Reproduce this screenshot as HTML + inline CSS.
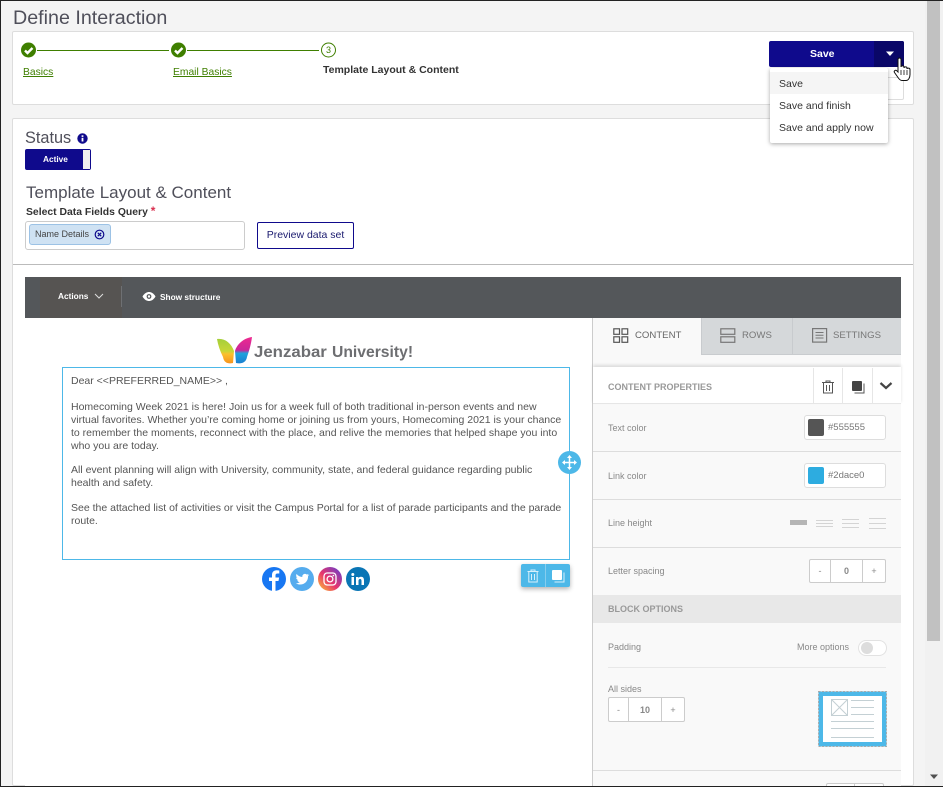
<!DOCTYPE html>
<html style="width:943px;height:787px;overflow:hidden"><head><meta charset="utf-8"><style>
*{box-sizing:border-box}
html,body{margin:0;padding:0}
body{width:943px;height:787px;position:relative;overflow:hidden;background:#f4f4f4;font-family:"Liberation Sans",sans-serif;color:#333}
.a{position:absolute}
.t{position:absolute;white-space:nowrap}
.g{font-size:9px;color:#888}
.sep{position:absolute;left:593px;width:308px;height:2px;background:#e6e6e6}
.box{position:absolute;background:#fff;border:1px solid #ddd;border-radius:3px}
.cell{position:absolute;background:#fff;border:1px solid #ccc;font-size:9px;color:#888;text-align:center}
</style></head><body>
<div class="t" style="left:13px;top:6px;font-size:19.700px;line-height:24px;color:#4f4f5a">Define Interaction</div>

<!-- stepper card -->
<div class="a" style="left:12px;top:31px;width:902px;height:74px;background:#fff;border:1px solid #ddd;border-radius:2px"></div>
<svg class="a" style="left:20px;top:41px" width="320" height="18" viewBox="0 0 320 18">
<line x1="17" y1="9.500" x2="149" y2="9.500" stroke="#3f7f00" stroke-width="1"/>
<line x1="167" y1="9.500" x2="299" y2="9.500" stroke="#3f7f00" stroke-width="1"/>
<circle cx="8.500" cy="9" r="7.500" fill="#3f7f00"/><path d="M5 9.500l2.500 2.500 5-5" fill="none" stroke="#fff" stroke-width="2.400"/>
<circle cx="158.500" cy="9" r="7.500" fill="#3f7f00"/><path d="M155 9.500l2.500 2.500 5-5" fill="none" stroke="#fff" stroke-width="2.400"/>
<circle cx="308.500" cy="9" r="7" fill="#fff" stroke="#3f7f00"/>
<text x="308.500" y="12" font-size="9" text-anchor="middle" fill="#3f7f00" font-family="Liberation Sans">3</text>
</svg>
<div class="t" style="left:23px;top:66px;font-size:10.300px;line-height:13px;color:#3f7f00;text-decoration:underline">Basics</div>
<div class="t" style="left:173px;top:66px;font-size:10.300px;line-height:13px;color:#3f7f00;text-decoration:underline">Email Basics</div>
<div class="t" style="left:323px;top:64px;font-size:10.500px;line-height:13px;font-weight:bold;color:#333">Template Layout &amp; Content</div>

<!-- second card -->
<div class="a" style="left:12px;top:118px;width:902px;height:668px;background:#fff;border:1px solid #ddd;border-radius:2px"></div>
<div class="t" style="left:25px;top:129px;font-size:16.300px;line-height:19px;color:#4f4f5a">Status</div>
<svg class="a" style="left:77px;top:133px" width="11" height="11" viewBox="0 0 11 11"><circle cx="5.500" cy="5.500" r="5.200" fill="#0f0a8c"/><rect x="4.600" y="4.800" width="1.800" height="3.700" fill="#fff"/><rect x="4.600" y="2.300" width="1.800" height="1.600" fill="#fff"/></svg>
<div class="a" style="left:25px;top:149px;width:66px;height:21px;background:#0f0a8c;border-radius:2px"></div>
<div class="a" style="left:83px;top:150px;width:7px;height:19px;background:#f0f0f0"></div>
<div class="t" style="left:43px;top:153px;font-size:8.300px;line-height:12px;color:#fff;font-weight:bold">Active</div>
<div class="t" style="left:26px;top:183px;font-size:17px;line-height:19px;color:#4f4f5a">Template Layout &amp; Content</div>
<div class="t" style="left:26px;top:205px;font-size:10.400px;line-height:13px;font-weight:bold;color:#333">Select Data Fields Query <span style="color:#d9304f;font-size:12px">*</span></div>
<div class="a" style="left:25px;top:221px;width:220px;height:29px;background:#fff;border:1px solid #ccc;border-radius:3px"></div>
<div class="a" style="left:29px;top:224px;width:82px;height:21px;background:#cfe2f3;border:1px solid #9cc2e5;border-radius:3px"></div>
<div class="t" style="left:35px;top:228px;font-size:9px;line-height:12px;color:#444">Name Details</div>
<svg class="a" style="left:94px;top:229px" width="11" height="11" viewBox="0 0 11 11"><circle cx="5.500" cy="5.500" r="4.300" fill="none" stroke="#0f0a8c" stroke-width="1.200"/><path d="M3.800 3.800l3.400 3.400M7.200 3.800l-3.400 3.400" stroke="#0f0a8c" stroke-width="1.200"/></svg>
<div class="a" style="left:257px;top:222px;width:97px;height:27px;background:#fff;border:1px solid #0f0a8c;border-radius:2px;font-size:10.500px;line-height:25px;text-align:center;color:#1a1a6e">Preview data set</div>
<div class="a" style="left:13px;top:264px;width:900px;height:1px;background:#bbb"></div>

<!-- toolbar -->
<div class="a" style="left:25px;top:277px;width:876px;height:41px;background:#54575a"></div>
<div class="a" style="left:40px;top:277px;width:82px;height:41px;background:#565452"></div>
<div class="a" style="left:121px;top:286px;width:1px;height:21px;background:#6e7073"></div>
<div class="t" style="left:58px;top:290px;font-size:8.300px;line-height:12px;color:#fff;font-weight:bold">Actions</div>
<svg class="a" style="left:94px;top:292px" width="10" height="8" viewBox="0 0 10 8"><path d="M1 2l4 4 4-4" fill="none" stroke="#ddd" stroke-width="1"/></svg>
<svg class="a" style="left:142px;top:291px" width="14" height="11" viewBox="0 0 14 11"><path d="M0.500 5.500C2.500 2 5 1 7 1s4.500 1 6.500 4.500C11.500 9 9 10 7 10S2.500 9 0.500 5.500z" fill="#fff"/><circle cx="7" cy="5.500" r="2.400" fill="#54575a"/><circle cx="7" cy="5.500" r="1.200" fill="#fff"/></svg>
<div class="t" style="left:160px;top:291px;font-size:8.300px;line-height:12px;color:#fff;font-weight:bold">Show structure</div>

<!-- stage -->
<div class="a" style="left:25px;top:318px;width:568px;height:468px;background:#fff"></div>
<svg class="a" style="left:217px;top:337px" width="36" height="28" viewBox="0 0 36 28">
<defs>
<linearGradient id="wl" x1="0" y1="0" x2="0" y2="1"><stop offset="0" stop-color="#a5cf3a"/><stop offset=".5" stop-color="#c8d636"/><stop offset=".62" stop-color="#fbc02d"/><stop offset="1" stop-color="#f7941d"/></linearGradient>
<linearGradient id="wr" x1="0" y1="0" x2="0" y2="1"><stop offset="0" stop-color="#ee2a8f"/><stop offset=".5" stop-color="#c9279a"/><stop offset=".62" stop-color="#1fa3dd"/><stop offset="1" stop-color="#1b7fd0"/></linearGradient>
</defs>
<path d="M0 2C8 1 14 6 17 14L16 26C11 27 7 26 6 20C3 14 1 8 0 2z" fill="url(#wl)"/>
<path d="M35 0C27 1 20 7 18 14L19 26C24 27 29 26 30 20C32 14 34 8 35 0z" fill="url(#wr)"/>
</svg>
<div class="t" style="left:254px;top:343px;font-size:16px;line-height:19px;font-weight:bold;color:#6d6e71;transform:scaleX(1.05);transform-origin:0 0">Jenzabar</div>
<div class="t" style="left:332px;top:343px;font-size:16px;line-height:19px;font-weight:bold;color:#6d6e71;transform:scaleX(.98);transform-origin:0 0">University!</div>

<div class="a" style="left:62px;top:367px;width:508px;height:193px;border:1px solid #4db8e8;background:#fff"></div>
<div class="a" style="left:71px;top:375px;width:495px;font-size:10.500px;line-height:13px;color:#555">
<div style="white-space:nowrap">Dear &lt;&lt;PREFERRED_NAME&gt;&gt; ,</div>
<div style="height:13px"></div>
<div style="white-space:nowrap">Homecoming Week 2021 is here! Join us for a week full of both traditional in-person events and new<br>virtual favorites. Whether you’re coming home or joining us from yours, Homecoming 2021 is your chance<br>to remember the moments, reconnect with the place, and relive the memories that helped shape you into<br>who you are today.</div>
<div style="height:11px"></div>
<div style="white-space:nowrap">All event planning will align with University, community, state, and federal guidance regarding public<br>health and safety.</div>
<div style="height:12px"></div>
<div style="white-space:nowrap">See the attached list of activities or visit the Campus Portal for a list of parade participants and the parade<br>route.</div>
</div>

<!-- move handle -->
<svg class="a" style="left:558px;top:451px" width="23" height="23" viewBox="0 0 23 23"><circle cx="11.500" cy="11.500" r="11.500" fill="#4db8e8"/><path d="M11.500 5v13M5 11.500h13" stroke="#fff" stroke-width="1.500"/><path d="M11.500 4l-2.500 3h5zM11.500 19l-2.500-3h5zM4 11.500l3-2.500v5zM19 11.500l-3-2.500v5z" fill="#fff"/></svg>

<!-- social -->
<svg class="a" style="left:262px;top:567px" width="108" height="24" viewBox="0 0 108 24">
<defs><linearGradient id="ig" x1="0" y1="1" x2="1" y2="0"><stop offset="0" stop-color="#fdc830"/><stop offset=".45" stop-color="#e8356d"/><stop offset="1" stop-color="#5b3fd6"/></linearGradient></defs>
<circle cx="12" cy="12" r="12" fill="#1877f2"/><path d="M13.500 24V14h3l.6-3.500h-3.600V8.500c0-1.200.5-2 2-2h1.800V3.500c-.8-.1-1.700-.2-2.600-.2-2.900 0-4.700 1.700-4.700 4.800v2.400H7V14h3v10z" fill="#fff"/>
<circle cx="40" cy="12" r="12" fill="#55acee"/><path d="M47 8c-.5.200-1 .4-1.600.4.600-.3 1-.9 1.200-1.500-.5.300-1.100.5-1.800.7-1.500-1.600-4.500-.5-4.500 1.800 0 .2 0 .4.100.6-2.300-.1-4.400-1.200-5.800-3-.8 1.300-.4 3 .8 3.800-.5 0-.9-.100-1.300-.4 0 1.300 1 2.500 2.300 2.800-.4.100-.8.100-1.200 0 .4 1.100 1.400 1.900 2.600 1.900-1.200.9-2.600 1.300-4 1.100 4.900 3 12.300.7 12.300-7.200.6-.4 1-.9 1.400-1.500z" fill="#fff"/>
<circle cx="68" cy="12" r="12" fill="url(#ig)"/><rect x="62" y="6" width="12" height="12" rx="3.200" fill="none" stroke="#fff" stroke-width="1.300"/><circle cx="68" cy="12" r="2.900" fill="none" stroke="#fff" stroke-width="1.300"/><circle cx="71.400" cy="8.600" r=".8" fill="#fff"/>
<circle cx="96" cy="12" r="12" fill="#0a75b5"/><rect x="89.500" y="10" width="2.500" height="8" fill="#fff"/><circle cx="90.800" cy="7.500" r="1.500" fill="#fff"/><path d="M94 10h2.400v1.200c.5-.8 1.400-1.400 2.600-1.400 2.300 0 3 1.500 3 3.700V18h-2.500v-4c0-1.100-.3-2-1.400-2-1.200 0-1.600.9-1.600 2v4H94z" fill="#fff"/>
</svg>

<!-- block actions -->
<div class="a" style="left:521px;top:564px;width:49px;height:23px;background:#4db8e8;border-radius:2px;box-shadow:0 2px 5px rgba(0,0,0,.3)"></div>
<div class="a" style="left:545px;top:564px;width:1px;height:23px;background:#86cdee"></div>
<svg class="a" style="left:526px;top:569px" width="14" height="14" viewBox="0 0 14 14"><path d="M1.500 2.500h11M5 2.500V1h4v1.500M2.800 2.500v10.500h8.400V2.500M5.500 5v6M8.500 5v6" fill="none" stroke="#d8f0fb" stroke-width="1"/></svg>
<svg class="a" style="left:551px;top:569px" width="15" height="14" viewBox="0 0 15 14"><rect x="1" y="1" width="10" height="10" rx="1" fill="#fff"/><path d="M13 3.500V13H3.500" fill="none" stroke="#d8f0fb" stroke-width="1"/></svg>

<!-- right panel -->
<div class="a" style="left:592px;top:318px;width:309px;height:468px;background:#f9f9f9;border-left:1px solid #ccc"></div>
<div class="a" style="left:702px;top:318px;width:199px;height:37px;background:#d5d8da;border-bottom:1px solid #c8cbce"></div>
<div class="a" style="left:792px;top:318px;width:1px;height:36px;background:#c8cbce"></div>
<div class="a" style="left:701px;top:318px;width:1px;height:37px;background:#c8cbce"></div>
<svg class="a" style="left:613px;top:328px" width="16" height="15" viewBox="0 0 16 15" fill="none" stroke="#555" stroke-width="1.200"><rect x=".8" y=".8" width="5.700" height="5.500"/><rect x="9" y=".8" width="5.700" height="5.500"/><rect x=".8" y="8.800" width="5.700" height="5.500"/><rect x="9" y="8.800" width="5.700" height="5.500"/></svg>
<div class="t" style="left:635px;top:329px;font-size:9.600px;line-height:13px;color:#666">CONTENT</div>
<svg class="a" style="left:720px;top:328px" width="16" height="15" viewBox="0 0 16 15" fill="none" stroke="#777" stroke-width="1.200"><rect x=".8" y=".8" width="14" height="5.500"/><rect x=".8" y="8.800" width="14" height="5.500"/></svg>
<div class="t" style="left:742px;top:329px;font-size:9.600px;line-height:13px;color:#777">ROWS</div>
<svg class="a" style="left:812px;top:328px" width="16" height="15" viewBox="0 0 16 15" fill="none" stroke="#777"><rect x=".6" y=".6" width="14" height="13.500" stroke-width="1.200"/><path d="M3.500 4.500h8M3.500 7.300h8M3.500 10h8"/></svg>
<div class="t" style="left:833px;top:329px;font-size:9.600px;line-height:13px;color:#777">SETTINGS</div>

<div class="a" style="left:593px;top:367px;width:308px;height:37px;background:#fff;box-shadow:0 -2px 3px rgba(0,0,0,.12);border-bottom:1px solid #e6e6e6"></div>
<div class="t" style="left:608px;top:381px;font-size:9px;line-height:13px;font-weight:bold;color:#999">CONTENT PROPERTIES</div>
<div class="a" style="left:813px;top:368px;width:1px;height:35px;background:#e6e6e6"></div>
<div class="a" style="left:842px;top:368px;width:1px;height:35px;background:#e6e6e6"></div>
<div class="a" style="left:872px;top:368px;width:1px;height:35px;background:#e6e6e6"></div>
<svg class="a" style="left:821px;top:380px" width="14" height="14" viewBox="0 0 14 14"><path d="M1 2.500h12M5 2.500V1h4v1.500M2.500 2.500V13h9V2.500M5.500 5v6M8.500 5v6" fill="none" stroke="#555" stroke-width="1"/></svg>
<svg class="a" style="left:851px;top:380px" width="14" height="14" viewBox="0 0 14 14"><rect x="1" y="1" width="10" height="10" rx="1" fill="#444"/><path d="M13 3.500V13H3.500" fill="none" stroke="#555" stroke-width="1"/></svg>
<svg class="a" style="left:879px;top:381px" width="14" height="10" viewBox="0 0 14 10"><path d="M1.500 2l5.500 5 5.500-5" fill="none" stroke="#444" stroke-width="2.200"/></svg>

<div class="t g" style="left:608px;top:422px;line-height:13px">Text color</div>
<div class="box" style="left:804px;top:415px;width:82px;height:25px"></div>
<div class="a" style="left:808px;top:419px;width:16px;height:17px;background:#555;border-radius:2px"></div>
<div class="t" style="left:828px;top:421px;font-size:9.500px;line-height:13px;color:#777">#555555</div>
<div class="sep" style="top:451px;height:1px;background:#ddd"></div>

<div class="t g" style="left:608px;top:470px;line-height:13px">Link color</div>
<div class="box" style="left:804px;top:463px;width:82px;height:25px"></div>
<div class="a" style="left:808px;top:467px;width:16px;height:17px;background:#2dace0;border-radius:2px"></div>
<div class="t" style="left:828px;top:469px;font-size:9.500px;line-height:13px;color:#777">#2dace0</div>
<div class="sep" style="top:499px;height:1px;background:#ddd"></div>

<div class="t g" style="left:608px;top:517px;line-height:13px">Line height</div>
<div class="a" style="left:790px;top:520px;width:17px;height:5px;background:#b5b5b5"></div>
<svg class="a" style="left:815px;top:516px" width="72" height="14" viewBox="0 0 72 14" stroke="#d4d4d4" stroke-width="1"><path d="M1 4.500h17M1 7.500h17M1 10.500h17M27 3.500h17M27 7.500h17M27 11.500h17M54 2.500h17M54 7.500h17M54 12.500h17"/></svg>
<div class="sep" style="top:547px;height:1px;background:#ddd"></div>

<div class="t g" style="left:608px;top:565px;line-height:13px">Letter spacing</div>
<div class="cell" style="left:809px;top:559px;width:22px;height:24px;line-height:23px;border-radius:2px 0 0 2px">-</div>
<div class="cell" style="left:830px;top:559px;width:33px;height:24px;line-height:23px;font-weight:bold">0</div>
<div class="cell" style="left:862px;top:559px;width:24px;height:24px;line-height:23px;border-radius:0 2px 2px 0">+</div>

<div class="a" style="left:593px;top:595px;width:308px;height:28px;background:#e8e8e8"></div>
<div class="t" style="left:608px;top:603px;font-size:9px;line-height:13px;font-weight:bold;color:#999">BLOCK OPTIONS</div>

<div class="t g" style="left:608px;top:641px;line-height:13px">Padding</div>
<div class="t g" style="left:797px;top:641px;line-height:13px">More options</div>
<div class="a" style="left:858px;top:640px;width:29px;height:16px;background:#fff;border:1px solid #e2e2e2;border-radius:8px"></div>
<div class="a" style="left:861px;top:642px;width:12px;height:12px;background:#ddd;border-radius:50%"></div>
<div class="a" style="left:608px;top:667px;width:278px;height:1px;background:#e8e8e8"></div>
<div class="t g" style="left:608px;top:683px;line-height:13px">All sides</div>
<div class="cell" style="left:608px;top:697px;width:21px;height:25px;line-height:24px;border-radius:2px 0 0 2px">-</div>
<div class="cell" style="left:628px;top:697px;width:34px;height:25px;line-height:24px;font-weight:bold">10</div>
<div class="cell" style="left:661px;top:697px;width:24px;height:25px;line-height:24px;border-radius:0 2px 2px 0">+</div>
<svg class="a" style="left:818px;top:691px" width="69" height="56" viewBox="0 0 69 56">
<rect x=".5" y=".5" width="68" height="55" fill="#4db8e8" stroke="#aaa" stroke-dasharray="2 1.500"/>
<rect x="5" y="5" width="59" height="46" fill="#fff"/>
<g stroke="#c4d0d4" stroke-width="1" fill="none"><rect x="13.500" y="8.500" width="16" height="16"/><path d="M13.500 8.500l16 16M29.500 8.500l-16 16M33 9.500h23M33 16.500h23M33 23.500h23M13 30.500h43M13 37.500h43M13 46.500h43"/></g>
</svg>
<div class="sep" style="top:770px;height:1px;background:#ddd"></div>
<div class="a" style="left:826px;top:783px;width:58px;height:4px;background:#fff;border:1px solid #ccc;border-bottom:0;border-radius:2px 2px 0 0"></div>
<div class="a" style="left:854px;top:783px;width:1px;height:4px;background:#ccc"></div>

<!-- save split button -->
<div class="a" style="left:769px;top:41px;width:135px;height:26px;background:#0f0a8c;border-radius:2px"></div>
<div class="a" style="left:874px;top:41px;width:30px;height:26px;background:#0a0768;border-radius:0 2px 2px 0"></div>
<div class="t" style="left:810px;top:48px;font-size:10.500px;line-height:13px;font-weight:bold;color:#fff">Save</div>
<svg class="a" style="left:885px;top:51px" width="10" height="6" viewBox="0 0 10 6"><path d="M1 .5h8L5 5z" fill="#fff"/></svg>
<div class="a" style="left:880px;top:77px;width:24px;height:23px;background:#fff;border:1px solid #ddd;border-radius:2px"></div>
<div class="a" style="left:770px;top:68px;width:118px;height:75px;background:#fff;border-radius:2px;box-shadow:0 1px 4px rgba(0,0,0,.35)"></div>
<div class="a" style="left:770px;top:72px;width:118px;height:22px;background:#f5f5f5"></div>
<div class="t" style="left:779px;top:78px;font-size:10.500px;line-height:13px;color:#333">Save</div>
<div class="t" style="left:779px;top:100px;font-size:10.500px;line-height:13px;color:#333">Save and finish</div>
<div class="t" style="left:779px;top:122px;font-size:10.500px;line-height:13px;color:#333">Save and apply now</div>
<svg class="a" style="left:893px;top:57px" width="20" height="26" viewBox="0 0 20 26"><path d="M5 2.500c0-2 3-2 3 0V10c0-1.500 3-1.500 3 0v1c0-1.500 3-1.500 3 0v1c0-1.200 3-1.200 3 .5v5c0 3-1.500 6-4 6H9c-2 0-3-1.500-4-3l-3.500-5c-1-1.500 1-3 2.300-1.700L5 15z" fill="#fff" stroke="#111" stroke-width="1"/><path d="M8 13v5M11 13v5M14 13v5" stroke="#111" stroke-width=".8"/></svg>

<!-- scrollbar -->
<div class="a" style="left:925px;top:1px;width:18px;height:785px;background:#f1f1f1"></div>
<div class="a" style="left:927px;top:1px;width:13px;height:640px;background:#c1c1c1"></div>
<svg class="a" style="left:929px;top:774px" width="10" height="6" viewBox="0 0 10 6"><path d="M1 .5h8L5 5z" fill="#505050"/></svg>

<!-- window frame -->
<div class="a" style="left:0;top:0;width:943px;height:1px;background:#222"></div>
<div class="a" style="left:0;top:0;width:1px;height:787px;background:#222"></div>
<div class="a" style="left:0;top:786px;width:943px;height:1px;background:#222"></div>
</body></html>
